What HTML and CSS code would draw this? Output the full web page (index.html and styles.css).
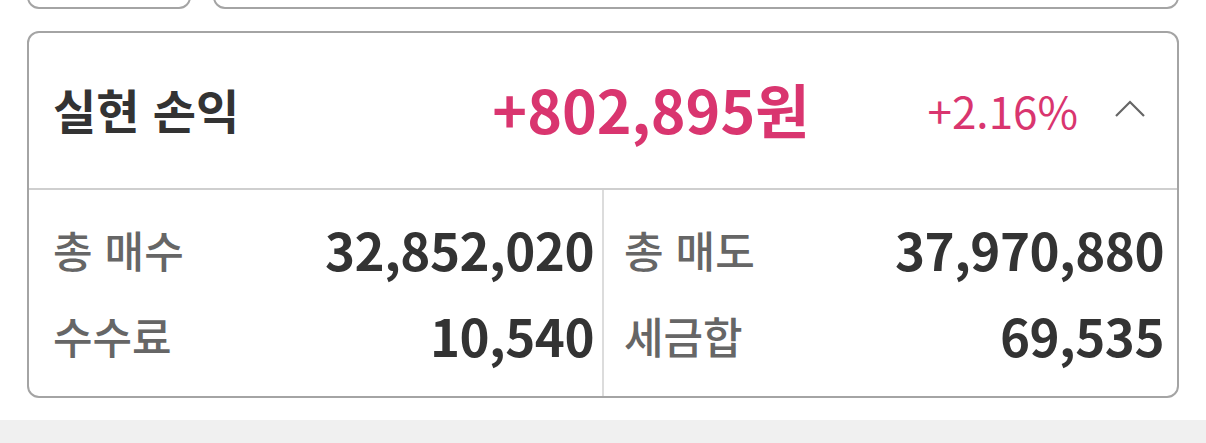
FILE: index.html
```html
<!DOCTYPE html>
<html lang="ko">
<head>
<meta charset="utf-8">
<title>실현 손익</title>
<link rel="stylesheet" href="styles.css">
</head>
<body>
<div class="page">
  <div class="stub-row">
    <div class="stub stub-small"></div>
    <div class="stub stub-wide"></div>
  </div>

  <section class="pnl-card">
    <header class="pnl-head">
      <h2 class="pnl-title">실현 손익</h2>
      <span class="pnl-amount">+802,895원</span>
      <span class="pnl-rate">+2.16%</span>
      <span class="pnl-toggle">
        <svg width="32" height="18" viewBox="0 0 32 18" aria-hidden="true">
          <polyline points="2,16 16,2 30,16" fill="none" stroke="#666" stroke-width="2.2"/>
        </svg>
      </span>
    </header>
    <div class="pnl-body">
      <div class="pnl-col pnl-col-left">
        <div class="pnl-row"><span class="pnl-label">총 매수</span><span class="pnl-value">32,852,020</span></div>
        <div class="pnl-row"><span class="pnl-label">수수료</span><span class="pnl-value">10,540</span></div>
      </div>
      <div class="pnl-col pnl-col-right">
        <div class="pnl-row"><span class="pnl-label">총 매도</span><span class="pnl-value">37,970,880</span></div>
        <div class="pnl-row"><span class="pnl-label">세금합</span><span class="pnl-value">69,535</span></div>
      </div>
    </div>
  </section>

  <div class="band"></div>
</div>
</body>
</html>
```

FILE: styles.css
```css
* { box-sizing: border-box; }

html, body {
  margin: 0;
  padding: 0;
  background: #ffffff;
}

body {
  font-family: "Noto Sans CJK KR", "Noto Sans", sans-serif;
  color: #333;
  overflow: hidden;
}

.page {
  display: flex;
  flex-direction: column;
  height: 443px;
}

/* cards of the previous section, scrolled mostly out of view */
.stub-row {
  display: flex;
  gap: 22px;
  padding: 0 27px;
}

.stub {
  height: 60px;
  margin-top: -51px;
  border: 2px solid #a4a4a4;
  border-radius: 12px;
  background: #fff;
}

.stub-small { width: 164px; }
.stub-wide { flex: 1; }

/* realized profit card */
.pnl-card {
  margin: 22px 27px 0;
  height: 367px;
  border: 2px solid #a4a4a4;
  border-radius: 12px;
  display: flex;
  flex-direction: column;
  background: #fff;
}

.pnl-head {
  height: 157px;
  display: flex;
  align-items: center;
  padding: 0 31px 0 24px;
  border-bottom: 2px solid #cfcfcf;
}

.pnl-title {
  flex: 1;
  margin: 0;
  font-size: 47px;
  font-weight: 700;
  color: #333;
  margin-top: -4px;
}

.pnl-amount {
  font-size: 59px;
  font-weight: 700;
  color: #d9356f;
  margin-top: -4px;
}

.pnl-rate {
  margin-left: 118px;
  font-size: 44px;
  font-weight: 400;
  color: #d9356f;
  margin-top: -2px;
}

.pnl-toggle {
  margin-left: 36px;
  display: flex;
  align-items: center;
  padding-bottom: 4px;
}

.pnl-body {
  flex: 1;
  display: flex;
}

.pnl-col {
  display: flex;
  flex-direction: column;
  padding-top: 16px;
}

.pnl-col-left {
  width: 575px;
  padding-left: 24px;
  padding-right: 8px;
  border-right: 2px solid #dcdcdc;
}

.pnl-col-right {
  flex: 1;
  padding-left: 20px;
  padding-right: 13px;
}

.pnl-row {
  height: 86px;
  display: flex;
  align-items: center;
  justify-content: space-between;
}

.pnl-label {
  font-size: 43px;
  color: #666;
  font-weight: 500;
}

.pnl-value {
  font-size: 51px;
  font-weight: 700;
  color: #333;
  letter-spacing: -0.5px;
}

.band {
  margin-top: 22px;
  flex: 1;
  background: #f0f0f0;
}
```
